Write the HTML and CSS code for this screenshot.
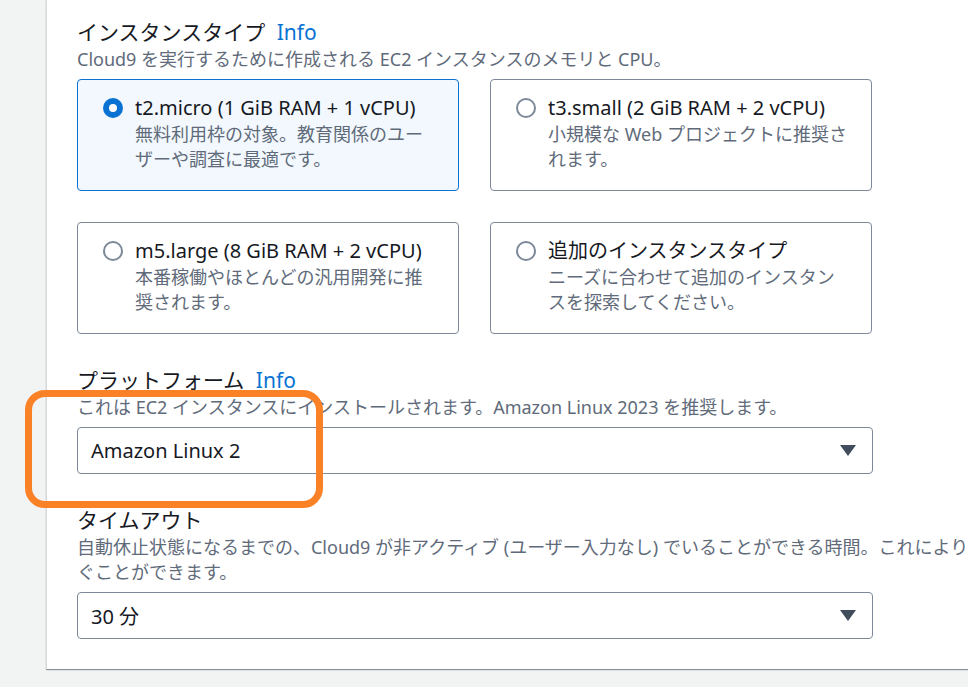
FILE: index.html
```html
<!DOCTYPE html>
<html lang="ja">
<head>
<meta charset="utf-8">
<title>Cloud9 環境設定</title>
<link rel="stylesheet" href="styles.css">
</head>
<body>
<div class="page">
  <div class="panel">
    <section class="field">
      <h2 class="label">インスタンスタイプ <a class="info" href="#">Info</a></h2>
      <p class="desc">Cloud9 を実行するために作成される EC2 インスタンスのメモリと CPU。</p>
      <div class="tiles">
        <div class="tile selected">
          <span class="radio on"></span>
          <div class="tile-body">
            <div class="tile-title">t2.micro (1 GiB RAM + 1 vCPU)</div>
            <div class="tile-desc">無料利用枠の対象。教育関係のユーザーや調査に最適です。</div>
          </div>
        </div>
        <div class="tile">
          <span class="radio"></span>
          <div class="tile-body">
            <div class="tile-title">t3.small (2 GiB RAM + 2 vCPU)</div>
            <div class="tile-desc">小規模な Web プロジェクトに推奨されます。</div>
          </div>
        </div>
        <div class="tile">
          <span class="radio"></span>
          <div class="tile-body">
            <div class="tile-title">m5.large (8 GiB RAM + 2 vCPU)</div>
            <div class="tile-desc">本番稼働やほとんどの汎用開発に推奨されます。</div>
          </div>
        </div>
        <div class="tile">
          <span class="radio"></span>
          <div class="tile-body">
            <div class="tile-title">追加のインスタンスタイプ</div>
            <div class="tile-desc">ニーズに合わせて追加のインスタンスを探索してください。</div>
          </div>
        </div>
      </div>
    </section>

    <section class="field gap-top">
      <h2 class="label">プラットフォーム <a class="info" href="#">Info</a></h2>
      <p class="desc">これは EC2 インスタンスにインストールされます。Amazon Linux 2023 を推奨します。</p>
      <div class="select">
        <span class="select-value">Amazon Linux 2</span>
        <svg class="caret" width="18" height="13" viewBox="0 0 18 13"><path d="M1 1 H17 L9 12 Z" fill="#414d5c"/></svg>
      </div>
    </section>

    <section class="field gap-top">
      <h2 class="label">タイムアウト</h2>
      <p class="desc nowrap">自動休止状態になるまでの、Cloud9 が非アクティブ (ユーザー入力なし) でいることができる時間。これにより、<br>ぐことができます。</p>
      <div class="select">
        <span class="select-value">30 分</span>
        <svg class="caret" width="18" height="13" viewBox="0 0 18 13"><path d="M1 1 H17 L9 12 Z" fill="#414d5c"/></svg>
      </div>
    </section>
  </div>
  <div class="highlight"></div>
</div>
</body>
</html>
```

FILE: styles.css
```css
* { box-sizing: border-box; }
html, body {
  margin: 0;
  padding: 0;
  background: #f2f3f3;
  overflow: hidden;
  width: 968px;
  height: 687px;
}
body {
  font-family: "Noto Sans", "Noto Sans CJK JP", sans-serif;
  color: #16191f;
}
.page {
  position: relative;
  padding-left: 46px;
}
.panel {
  width: 1000px;
  background: #fff;
  border-left: 1px solid #d5dbdb;
  box-shadow: 0 1px 1px 0 rgba(0, 28, 36, 0.35), 1px 1px 1px 0 rgba(0, 28, 36, 0.15);
  padding: 18px 0 30px 30px;
}
.field { display: flex; flex-direction: column; }
.gap-top { margin-top: 32px; }
.label {
  margin: 0;
  font-size: 21px;
  font-weight: 400;
  line-height: 28px;
  color: #16191f;
}
.info {
  color: #0972d3;
  text-decoration: none;
  margin-left: 6px;
  font-size: 21px;
}
.desc {
  margin: 1px 0 6px;
  font-size: 18px;
  line-height: 25px;
  color: #5f6b7a;
}
.nowrap { white-space: nowrap; }
.tiles {
  margin-top: 1px;
  display: grid;
  grid-template-columns: 382px 382px;
  gap: 31px;
}
.tile {
  height: 112px;
  border: 1px solid #7d8998;
  border-radius: 4px;
  padding: 14px 22px 0 25px;
  display: flex;
  align-items: flex-start;
  gap: 12px;
  background: #fff;
}
.tile.selected {
  background: #f2f8fd;
  border-color: #0972d3;
}
.radio {
  flex: none;
  width: 20px;
  height: 20px;
  margin-top: 4px;
  border-radius: 50%;
  border: 2px solid #7d8998;
  background: #fff;
}
.radio.on {
  border: 6px solid #0972d3;
}
.tile-title {
  font-size: 20px;
  line-height: 28px;
  color: #16191f;
}
.tile-desc {
  font-size: 18px;
  line-height: 25px;
  color: #5f6b7a;
}
.select {
  width: 796px;
  height: 47px;
  margin-top: 1px;
  border: 1px solid #7d8998;
  border-radius: 4px;
  display: flex;
  align-items: center;
  justify-content: space-between;
  padding: 0 15px 0 13px;
}
.select-value {
  font-size: 20px;
  color: #16191f;
}
.caret { display: block; }
.highlight {
  position: absolute;
  left: 25px;
  top: 390px;
  width: 298px;
  height: 118px;
  border: 7px solid #fb8127;
  border-radius: 20px;
}
```
